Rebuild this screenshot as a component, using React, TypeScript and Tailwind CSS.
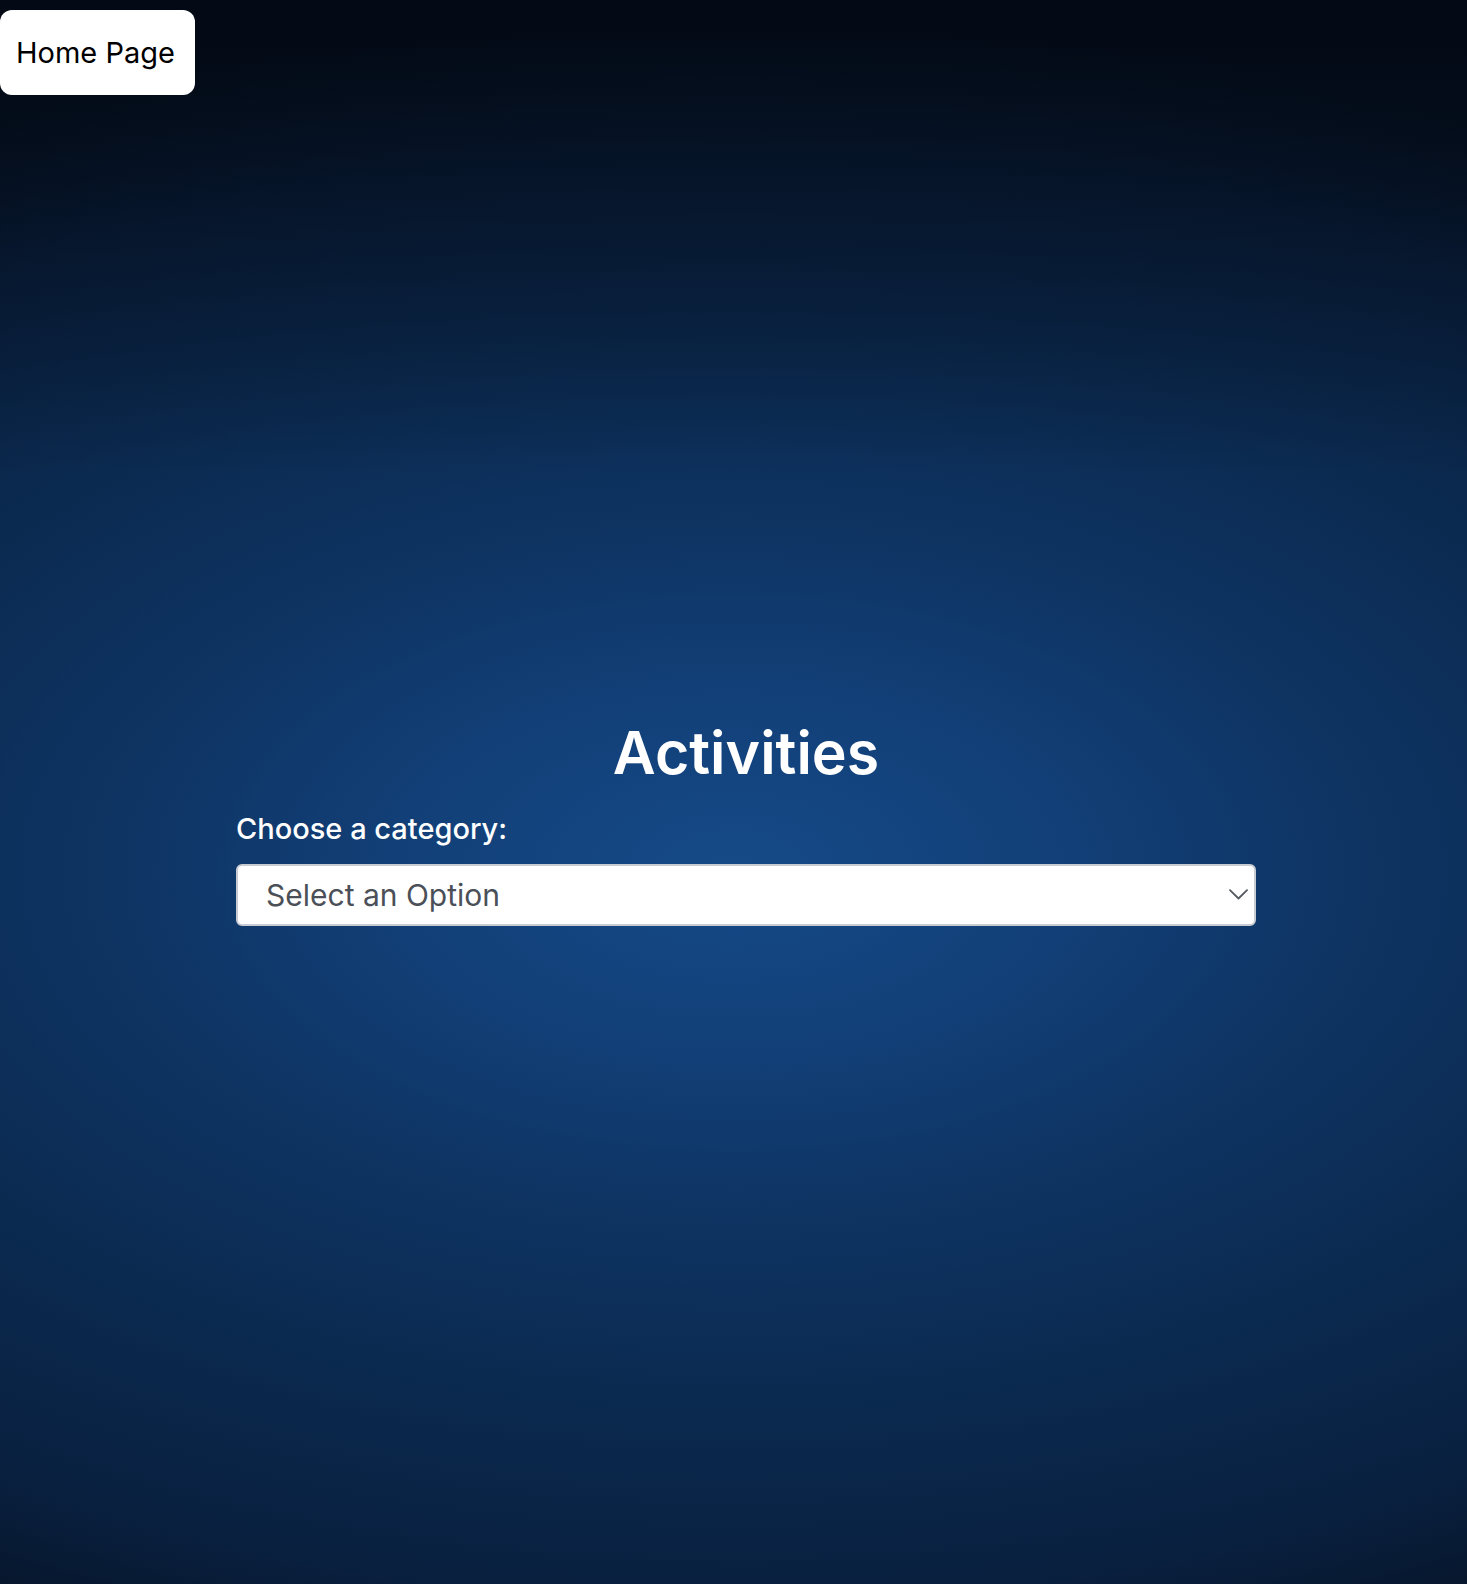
import React from "react";

export default function App() {
  return (
    <div
      className="relative min-h-[1584px] w-full overflow-hidden bg-[radial-gradient(ellipse_1550px_850px_at_50%_55%,#154a88_0%,#123f77_22%,#0e3463_40%,#0b2a50_62%,#09203f_85%,#061428_100%)]"
      style={{ fontFamily: "Inter, 'Noto Sans', sans-serif" }}
    >
      <div className="pointer-events-none absolute inset-0 bg-[linear-gradient(180deg,rgba(2,6,14,0.75)_0%,rgba(2,6,14,0)_30%)]" />
      <div className="relative flex flex-col">
        <div className="pt-[10px]">
          <button className="flex h-[85px] w-[195px] items-center rounded-[12px] bg-white pl-[16px] text-[29px] font-normal text-black">
            Home Page
          </button>
        </div>
        <div className="ml-[236px] flex w-[1020px] flex-col pt-[622px]">
          <h1 className="text-center text-[59px] font-semibold leading-[72px] text-white">
            Activities
          </h1>
          <label className="mt-[22px] text-[29px] font-medium leading-[36px] text-white">
            Choose a category:
          </label>
          <div className="relative mt-[17px]">
            <select className="h-[62px] w-full appearance-none rounded-[6px] border-2 border-[#c8ccd2] bg-white pl-[28px] text-[30px] text-[#4b5058] outline-none">
              <option>Select an Option</option>
            </select>
            <svg
              className="pointer-events-none absolute right-[8px] top-[25px]"
              width="19"
              height="11"
              viewBox="0 0 19 11"
              fill="none"
            >
              <path d="M1 1.2L9.5 9.5L18 1.2" stroke="#555a61" strokeWidth="1.8" strokeLinecap="round" strokeLinejoin="round" />
            </svg>
          </div>
        </div>
      </div>
    </div>
  );
}
